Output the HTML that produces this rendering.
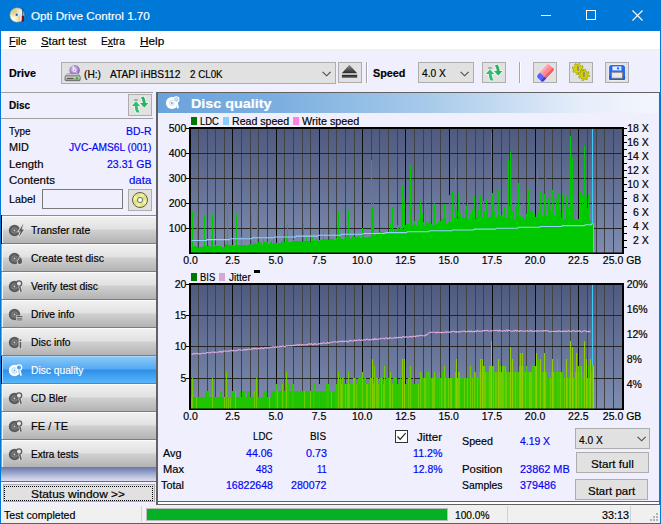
<!DOCTYPE html>
<html><head><meta charset="utf-8"><title>Opti Drive Control 1.70</title>
<style>
html,body{margin:0;padding:0;}
body{width:661px;height:524px;overflow:hidden;background:#efeffd;font-family:"Liberation Sans",sans-serif;}
#w{position:relative;width:661px;height:524px;overflow:hidden;background:#efeffd;}
#w>div,#w>svg,#w>span{position:absolute;}
#w>svg{overflow:visible;}
.t{white-space:pre;transform-origin:0 50%;-webkit-text-stroke:0.18px currentColor;}
u{text-decoration:underline;text-underline-offset:1px;}
</style></head><body><div id="w">
<div style="left:0px;top:0px;width:661px;height:31px;background:#0078d7"></div>
<div style="left:0px;top:31px;width:1px;height:493px;background:#0078d7"></div>
<div style="left:660px;top:31px;width:1px;height:493px;background:#0078d7"></div>
<div style="left:0px;top:523px;width:661px;height:1px;background:#0078d7"></div>
<div style="left:9.6px;top:7.6px;width:14.2px;height:14.2px;border-radius:50%;background:conic-gradient(from 0deg,#e6d69c 0deg,#f8efc4 30deg,#fffbe4 60deg,#f1e4b0 100deg,#e2d090 140deg,#fdf6d2 200deg,#fffce8 235deg,#ead9a0 280deg,#dccb8c 320deg,#e6d69c 360deg);box-shadow:0 0 0 .5px rgba(190,170,100,.8)"></div>
<svg style="left:9px;top:7px" width="16" height="16" viewBox="9 7 16 16">
<circle cx="16.7" cy="14.7" r="2.2" fill="#e9e6e0"/><circle cx="16.7" cy="14.7" r="1.2" fill="#0a6ed0"/>
<path d="M19.0 9.8 L19.6 8.8 L19.9 10.4 L20.5 10.4 L20.9 8.9 L21.4 10 L20.9 12 L21.1 21 L20.2 21.6 L19.7 12 Z" fill="#f2f0ec" stroke="#cfc8b4" stroke-width=".3"/>
<rect x="22.3" y="8.6" width="1" height="7" fill="#1a3a7a"/>
<rect x="21.9" y="15.6" width="2.1" height="6" rx=".6" fill="#7a0c0c"/>
</svg>
<span class="t" style="top:10px;font-size:11.2px;line-height:12px;color:#fff;left:31.00px;transform:scaleX(1.0447);">Opti Drive Control 1.70</span>
<div style="left:541px;top:15px;width:10px;height:1px;background:#fff"></div>
<div style="left:586px;top:10px;width:10px;height:10px;border:1px solid #fff;box-sizing:border-box"></div>
<svg style="left:632px;top:10px" width="11" height="11" viewBox="0 0 11 11"><path d="M0.5 0.5 L10.5 10.5 M10.5 0.5 L0.5 10.5" stroke="#fff" stroke-width="1.1" fill="none"/></svg>
<div style="left:1px;top:31px;width:659px;height:18px;background:#fff"></div>
<div style="left:1px;top:49px;width:659px;height:2px;background:#f0f0f0"></div>
<span class="t" style="top:35px;font-size:11.2px;line-height:12px;color:#000;left:8.50px;transform:scaleX(0.9705);"><u>F</u>ile</span>
<span class="t" style="top:35px;font-size:11.2px;line-height:12px;color:#000;left:40.50px;transform:scaleX(1.0156);"><u>S</u>tart test</span>
<span class="t" style="top:35px;font-size:11.2px;line-height:12px;color:#000;left:100.50px;transform:scaleX(0.9158);">E<u>x</u>tra</span>
<span class="t" style="top:35px;font-size:11.2px;line-height:12px;color:#000;left:139.50px;transform:scaleX(1.0514);"><u>H</u>elp</span>
<div style="left:1px;top:51px;width:659px;height:41px;background:#efeffd"></div>
<span class="t" style="top:67px;font-size:11.2px;line-height:12px;color:#000;font-weight:bold;left:9.40px;transform:scaleX(0.9643);">Drive</span>
<div style="left:61px;top:62px;width:275px;height:22px;background:#e1e1e1;border:1px solid #adadad;box-sizing:border-box"></div>
<svg style="left:64px;top:65px" width="17" height="16" viewBox="0 0 17 16">
<defs><radialGradient id="gpd" cx="45%" cy="40%" r="65%"><stop offset="0" stop-color="#f4ecff"/><stop offset="0.55" stop-color="#a98ad0"/><stop offset="1" stop-color="#6b4fa0"/></radialGradient>
<linearGradient id="gdr" x1="0" y1="0" x2="0" y2="1"><stop offset="0" stop-color="#e8e8e8"/><stop offset="1" stop-color="#8c8c8c"/></linearGradient></defs>
<circle cx="10.6" cy="5.3" r="5.2" fill="url(#gpd)"/>
<path d="M10.6 5.3 L7 1.6 A5.2 5.2 0 0 1 10 0.2 Z" fill="#fff" opacity=".45"/><path d="M10.6 5.3 L14.6 8.6 A5.2 5.2 0 0 1 12 10.3 Z" fill="#fff" opacity=".35"/>
<circle cx="10.6" cy="5.3" r="1.7" fill="#f2ecfa"/><circle cx="10.6" cy="5.3" r=".7" fill="#9a86c0"/>
<path d="M1.2 11 L3.8 8.7 L14.2 8.7 L16 11 Z" fill="#d4d4d4" stroke="#7a7a7a" stroke-width=".6"/>
<rect x="1" y="11" width="15.2" height="4.7" rx=".9" fill="url(#gdr)" stroke="#5e5e5e" stroke-width=".8"/>
<rect x="3" y="12.9" width="6.4" height="1" fill="#4a4a4a"/>
<circle cx="12.9" cy="13.3" r="1.25" fill="#1ec41e"/>
</svg>
<span class="t" style="top:68px;font-size:11.2px;line-height:12px;color:#000;left:83.60px;transform:scaleX(0.9116);">(H:)</span>
<span class="t" style="top:68px;font-size:11.2px;line-height:12px;color:#000;left:109.80px;transform:scaleX(0.9136);">ATAPI iHBS112</span>
<span class="t" style="top:68px;font-size:11.2px;line-height:12px;color:#000;left:189.80px;transform:scaleX(0.8728);">2 CL0K</span>
<svg style="left:322.4px;top:70.8px" width="10" height="6" viewBox="0 0 10 6"><path d="M0.6 0.8 L4.6 4.8 L8.6 0.8" stroke="#4a4a4a" stroke-width="1.15" fill="none"/></svg>
<div style="left:338px;top:62px;width:24px;height:21px;background:#e1e1e1;border:1px solid #adadad;box-sizing:border-box"></div>
<svg style="left:341px;top:64px" width="17" height="15" viewBox="0 0 17 15"><defs><linearGradient id="gej" x1="0" y1="0" x2="0" y2="1"><stop offset="0" stop-color="#909090"/><stop offset="1" stop-color="#282828"/></linearGradient><linearGradient id="gej2" x1="0" y1="0" x2="0" y2="1"><stop offset="0" stop-color="#1e1e1e"/><stop offset="1" stop-color="#606060"/></linearGradient></defs><path d="M8.4 0.8 L16.2 9.2 L0.8 9.2 Z" fill="url(#gej)"/><rect x="0.9" y="10.8" width="15.3" height="3" fill="url(#gej2)"/></svg>
<div style="left:366px;top:62px;width:1px;height:21px;background:#a8a8a8"></div>
<div style="left:367px;top:62px;width:1px;height:21px;background:#fff"></div>
<span class="t" style="top:67px;font-size:11.2px;line-height:12px;color:#000;font-weight:bold;left:372.50px;transform:scaleX(0.9673);">Speed</span>
<div style="left:418px;top:62px;width:56px;height:21px;background:#e1e1e1;border:1px solid #adadad;box-sizing:border-box"></div>
<span class="t" style="top:67px;font-size:11.2px;line-height:12px;color:#000;left:421.80px;transform:scaleX(0.9101);">4.0 X</span>
<svg style="left:460.4px;top:70.8px" width="10" height="6" viewBox="0 0 10 6"><path d="M0.6 0.8 L4.6 4.8 L8.6 0.8" stroke="#4a4a4a" stroke-width="1.15" fill="none"/></svg>
<div style="left:482px;top:62px;width:24px;height:21px;background:#e1e1e1;border:1px solid #adadad;box-sizing:border-box"></div>
<svg style="left:482px;top:62px" width="24" height="22" viewBox="0 0 24 22">
<g stroke="#f4fff8" stroke-width="1.6" stroke-linejoin="round" opacity=".9"><path d="M3.8 12 L8 7.2 L12.2 12 L9.6 12 Q9.8 15.6 11.6 18.4 L8.4 18.6 Q6.9 15.8 6.8 12 Z" fill="none"/><path d="M12 9 L16.3 13.8 L20.4 9 L17.8 9 Q17.6 5.2 15.6 2.6 L12.8 3.6 Q14.6 5.8 14.8 9 Z" fill="none"/></g>
<path d="M3.8 12 L8 7.2 L12.2 12 L9.6 12 Q9.8 15.6 11.6 18.4 L8.4 18.6 Q6.9 15.8 6.8 12 Z" fill="#2cc070"/>
<path d="M12 9 L16.3 13.8 L20.4 9 L17.8 9 Q17.6 5.2 15.6 2.6 L12.8 3.6 Q14.6 5.8 14.8 9 Z" fill="#27b264"/>
<path d="M6.2 6 H9.8" stroke="#555" stroke-width=".8"/>
</svg>
<div style="left:519px;top:62px;width:1px;height:21px;background:#a8a8a8"></div>
<div style="left:520px;top:62px;width:1px;height:21px;background:#fff"></div>
<div style="left:533px;top:62px;width:24px;height:21px;background:#e1e1e1;border:1px solid #adadad;box-sizing:border-box"></div>
<svg style="left:533px;top:62px" width="24" height="21" viewBox="0 0 24 21">
<g transform="translate(12.4 11) rotate(-47)">
<g transform="scale(0.96 1.14)"><rect x="-9.6" y="-4.2" width="19.2" height="8.4" rx="1.8" fill="#fff" opacity=".9"/>
<path d="M-3.6 -3.8 H7.4 Q9.2 -3.8 9.2 -2 V2 Q9.2 3.8 7.4 3.8 H-3.6 Z" fill="#ff8890"/>
<path d="M-3.6 1.6 H9.2 V2 Q9.2 3.8 7.4 3.8 H-3.6 Z" fill="#e8606c"/>
<path d="M-3.6 -3.8 H7.4 Q9.2 -3.8 9.2 -2 V-1.6 H-3.6 Z" fill="#ffa4aa"/>
<path d="M-3.6 -3.8 H-7.2 Q-9.2 -3.8 -9.2 -2 V2 Q-9.2 3.8 -7.2 3.8 H-3.6 Z" fill="#5866ff"/>
<path d="M-3.6 1.6 H-9.2 V2 Q-9.2 3.8 -7.2 3.8 H-3.6 Z" fill="#3444d8"/>
</g></g></svg>
<div style="left:569px;top:62px;width:24px;height:21px;background:#e1e1e1;border:1px solid #adadad;box-sizing:border-box"></div>
<svg style="left:569px;top:62px" width="24" height="21" viewBox="0 0 24 21">
<g>
<circle cx="8.9" cy="6.9" r="4.6" fill="none" stroke="#6a6a00" stroke-width="2.4" stroke-dasharray="1.7 1.9"/>
<circle cx="8.9" cy="6.9" r="4.3" fill="#d6d600" stroke="#8a8a00" stroke-width=".6"/>
<circle cx="8.9" cy="6.9" r="4.6" fill="none" stroke="#d6d600" stroke-width="1.6" stroke-dasharray="1.7 1.9"/>
<rect x="8" y="4.2" width="1.9" height="4.6" fill="#8c8c8c"/>
<circle cx="14.8" cy="12.9" r="4.6" fill="none" stroke="#6a6a00" stroke-width="2.4" stroke-dasharray="1.7 1.9"/>
<circle cx="14.8" cy="12.9" r="4.3" fill="#d0d000" stroke="#8a8a00" stroke-width=".6"/>
<circle cx="14.8" cy="12.9" r="4.6" fill="none" stroke="#d0d000" stroke-width="1.6" stroke-dasharray="1.7 1.9"/>
<rect x="13.9" y="10.2" width="1.9" height="4.6" fill="#8c8c8c"/>
</g></svg>
<div style="left:605px;top:62px;width:24px;height:21px;background:#e1e1e1;border:1px solid #adadad;box-sizing:border-box"></div>
<svg style="left:605px;top:62px" width="24" height="21" viewBox="0 0 24 21">
<path d="M5.4 2.4 H18.4 L20.6 4.6 V17 Q20.6 18.4 19.2 18.4 H5 Q3.6 18.4 3.6 17 V4.2 Z" fill="#fff" opacity=".9"/>
<path d="M5.6 2.9 H18.2 L20.1 4.8 V16.8 Q20.1 17.9 19 17.9 H5.2 Q4.1 17.9 4.1 16.8 V4.4 Z" fill="#256af0"/>
<path d="M4.1 14 V16.8 Q4.1 17.9 5.2 17.9 H19 Q20.1 17.9 20.1 16.8 V14 Z" fill="#1c5ce0"/>
<rect x="7.4" y="4.4" width="9" height="4" fill="#e6eefc"/>
<circle cx="13" cy="6.4" r="1.15" fill="#2468ff"/><rect x="14.6" y="4.4" width="1" height="4" fill="#c8d8f8"/>
<rect x="6.6" y="10.2" width="11" height="6" fill="#e9e9e9" stroke="#7c7c7c" stroke-width=".9"/>
</svg>
<div style="left:1px;top:92px;width:152px;height:1px;background:#a0a0a0"></div>
<span class="t" style="top:99px;font-size:11.2px;line-height:12px;color:#000;font-weight:bold;left:9.20px;transform:scaleX(0.8886);">Disc</span>
<div style="left:128px;top:94px;width:24px;height:22px;background:#e1e1e1;border:1px solid #adadad;box-sizing:border-box"></div>
<svg style="left:128px;top:94px" width="24" height="22" viewBox="0 0 24 22">
<g stroke="#f4fff8" stroke-width="1.6" stroke-linejoin="round" opacity=".9"><path d="M3.8 12 L8 7.2 L12.2 12 L9.6 12 Q9.8 15.6 11.6 18.4 L8.4 18.6 Q6.9 15.8 6.8 12 Z" fill="none"/><path d="M12 9 L16.3 13.8 L20.4 9 L17.8 9 Q17.6 5.2 15.6 2.6 L12.8 3.6 Q14.6 5.8 14.8 9 Z" fill="none"/></g>
<path d="M3.8 12 L8 7.2 L12.2 12 L9.6 12 Q9.8 15.6 11.6 18.4 L8.4 18.6 Q6.9 15.8 6.8 12 Z" fill="#2cc070"/>
<path d="M12 9 L16.3 13.8 L20.4 9 L17.8 9 Q17.6 5.2 15.6 2.6 L12.8 3.6 Q14.6 5.8 14.8 9 Z" fill="#27b264"/>
<path d="M6.2 6 H9.8" stroke="#555" stroke-width=".8"/>
</svg>
<div style="left:1px;top:118px;width:152px;height:1px;background:#a0a0a0"></div>
<span class="t" style="top:125px;font-size:11.2px;line-height:12px;color:#000;left:9.20px;transform:scaleX(0.8846);">Type</span>
<span class="t" style="top:125px;font-size:11.2px;line-height:12px;color:#0404f4;left:126.00px;transform:scaleX(0.9312);">BD-R</span>
<span class="t" style="top:141px;font-size:11.2px;line-height:12px;color:#000;left:9.20px;transform:scaleX(0.9731);">MID</span>
<span class="t" style="top:141px;font-size:11.2px;line-height:12px;color:#0404f4;left:69.00px;transform:scaleX(0.9122);">JVC-AMS6L (001)</span>
<span class="t" style="top:158px;font-size:11.2px;line-height:12px;color:#000;left:9.20px;transform:scaleX(1.0067);">Length</span>
<span class="t" style="top:158px;font-size:11.2px;line-height:12px;color:#0404f4;left:106.70px;transform:scaleX(0.9404);">23.31 GB</span>
<span class="t" style="top:174px;font-size:11.2px;line-height:12px;color:#000;left:9.20px;transform:scaleX(1.0255);">Contents</span>
<span class="t" style="top:174px;font-size:11.2px;line-height:12px;color:#0404f4;left:129.00px;transform:scaleX(1.0211);">data</span>
<span class="t" style="top:193px;font-size:11.2px;line-height:12px;color:#000;left:9.20px;transform:scaleX(0.9604);">Label</span>
<div style="left:42px;top:189px;width:81px;height:20px;background:#efeffd;border:1px solid #7a7a7a;box-sizing:border-box"></div>
<div style="left:128px;top:189px;width:24px;height:22px;background:#e1e1e1;border:1px solid #adadad;box-sizing:border-box"></div>
<div style="left:132.1px;top:192.0px;width:16px;height:16px;border-radius:50%;box-sizing:border-box;border:.8px solid #5e5e30;background:conic-gradient(from 20deg,#f4f4a8 0deg,#dcdc80 45deg,#f6f6b0 90deg,#e0e088 135deg,#f4f4a8 180deg,#dcdc80 225deg,#f6f6b0 270deg,#e0e088 315deg,#f4f4a8 360deg)"></div>
<svg style="left:128px;top:189px" width="24" height="22" viewBox="0 0 24 22">
<circle cx="12.1" cy="11" r="2.7" fill="#e4f0dc" stroke="#6c6c5c" stroke-width=".9"/><circle cx="12.1" cy="11" r="1.1" fill="#fff"/>
</svg>
<div style="left:1px;top:215px;width:155px;height:1px;background:#8c8c8c"></div>
<div style="left:1px;top:216px;width:155px;height:27px;background:linear-gradient(#f2f2f2 0%,#e1e1e1 48%,#d0d0d0 52%,#b3b3b3 100%)"></div>
<div style="left:1px;top:216px;width:155px;height:1px;background:#fafafa"></div>
<div style="left:1px;top:216px;width:1px;height:27px;background:#9a9a9a"></div>
<div style="left:2px;top:216px;width:1px;height:27px;background:#f6f6f6"></div>
<div style="left:1px;top:243px;width:155px;height:1px;background:#7d7d7d"></div>
<svg style="left:7.6px;top:221.8px" width="17" height="17" viewBox="0 0 17 17"><circle cx="6.5" cy="8.5" r="5.7" fill="#5c5c5c"/><circle cx="6.5" cy="8.5" r="2.7" fill="none" stroke="#a0a0a0" stroke-width=".7"/><circle cx="6.5" cy="8.5" r=".9" fill="#d6d6d6"/><path d="M15.4 1.8 L10.4 9.4 L12.6 9.4 L10.8 15.6 L16 7.4 L13.6 7.4 Z" fill="#e4e4e4" stroke="#e4e4e4" stroke-width="1.6"/><path d="M15.4 1.8 L10.4 9.4 L12.6 9.4 L10.8 15.6 L16 7.4 L13.6 7.4 Z" fill="#5c5c5c"/></svg>
<span class="t" style="top:224px;font-size:11.5px;line-height:12px;color:#000;left:31.20px;transform:scaleX(0.9070);">Transfer rate</span>
<div style="left:1px;top:244px;width:155px;height:27px;background:linear-gradient(#f2f2f2 0%,#e1e1e1 48%,#d0d0d0 52%,#b3b3b3 100%)"></div>
<div style="left:1px;top:244px;width:155px;height:1px;background:#fafafa"></div>
<div style="left:1px;top:244px;width:1px;height:27px;background:#9a9a9a"></div>
<div style="left:2px;top:244px;width:1px;height:27px;background:#f6f6f6"></div>
<div style="left:1px;top:271px;width:155px;height:1px;background:#7d7d7d"></div>
<svg style="left:7.6px;top:249.8px" width="17" height="17" viewBox="0 0 17 17"><circle cx="6.5" cy="8.5" r="5.7" fill="#5c5c5c"/><circle cx="6.5" cy="8.5" r="2.7" fill="none" stroke="#a0a0a0" stroke-width=".7"/><circle cx="6.5" cy="8.5" r=".9" fill="#d6d6d6"/><path d="M11.8 6.2 Q14.8 8.6 14.6 11.6 Q14.4 14.4 11.8 14.6 Q9.2 14.4 9.2 11.8 Q9.4 9.6 11 9 Q10.6 7.4 11.8 6.2 Z" fill="#5c5c5c" stroke="#e4e4e4" stroke-width=".8"/></svg>
<span class="t" style="top:252px;font-size:11.5px;line-height:12px;color:#000;left:31.20px;transform:scaleX(0.9128);">Create test disc</span>
<div style="left:1px;top:272px;width:155px;height:27px;background:linear-gradient(#f2f2f2 0%,#e1e1e1 48%,#d0d0d0 52%,#b3b3b3 100%)"></div>
<div style="left:1px;top:272px;width:155px;height:1px;background:#fafafa"></div>
<div style="left:1px;top:272px;width:1px;height:27px;background:#9a9a9a"></div>
<div style="left:2px;top:272px;width:1px;height:27px;background:#f6f6f6"></div>
<div style="left:1px;top:299px;width:155px;height:1px;background:#7d7d7d"></div>
<svg style="left:7.6px;top:277.8px" width="17" height="17" viewBox="0 0 17 17"><circle cx="6.5" cy="8.5" r="5.7" fill="#5c5c5c"/><circle cx="6.5" cy="8.5" r="2.7" fill="none" stroke="#a0a0a0" stroke-width=".7"/><circle cx="6.5" cy="8.5" r=".9" fill="#d6d6d6"/><circle cx="11" cy="5.6" r="2.7" fill="#e4e4e4" stroke="#5c5c5c" stroke-width="1.3"/><path d="M11.8 8.4 L13 13.6" stroke="#e4e4e4" stroke-width="3"/><path d="M11.8 8.4 L13 13.6" stroke="#5c5c5c" stroke-width="1.7"/></svg>
<span class="t" style="top:280px;font-size:11.5px;line-height:12px;color:#000;left:31.20px;transform:scaleX(0.9040);">Verify test disc</span>
<div style="left:1px;top:300px;width:155px;height:27px;background:linear-gradient(#f2f2f2 0%,#e1e1e1 48%,#d0d0d0 52%,#b3b3b3 100%)"></div>
<div style="left:1px;top:300px;width:155px;height:1px;background:#fafafa"></div>
<div style="left:1px;top:300px;width:1px;height:27px;background:#9a9a9a"></div>
<div style="left:2px;top:300px;width:1px;height:27px;background:#f6f6f6"></div>
<div style="left:1px;top:327px;width:155px;height:1px;background:#7d7d7d"></div>
<svg style="left:7.6px;top:305.8px" width="17" height="17" viewBox="0 0 17 17"><circle cx="6.5" cy="8.5" r="5.7" fill="#5c5c5c"/><circle cx="6.5" cy="8.5" r="2.7" fill="none" stroke="#a0a0a0" stroke-width=".7"/><circle cx="6.5" cy="8.5" r=".9" fill="#d6d6d6"/><rect x="8" y="9.5" width="7" height="5" fill="#e4e4e4"/><path d="M8.5 10.5 H14.5 M8.5 12.2 H14.5 M8.5 13.9 H14.5" stroke="#5c5c5c" stroke-width="1"/></svg>
<span class="t" style="top:308px;font-size:11.5px;line-height:12px;color:#000;left:31.20px;transform:scaleX(0.8953);">Drive info</span>
<div style="left:1px;top:328px;width:155px;height:27px;background:linear-gradient(#f2f2f2 0%,#e1e1e1 48%,#d0d0d0 52%,#b3b3b3 100%)"></div>
<div style="left:1px;top:328px;width:155px;height:1px;background:#fafafa"></div>
<div style="left:1px;top:328px;width:1px;height:27px;background:#9a9a9a"></div>
<div style="left:2px;top:328px;width:1px;height:27px;background:#f6f6f6"></div>
<div style="left:1px;top:355px;width:155px;height:1px;background:#7d7d7d"></div>
<svg style="left:7.6px;top:333.8px" width="17" height="17" viewBox="0 0 17 17"><circle cx="6.5" cy="8.5" r="5.7" fill="#5c5c5c"/><circle cx="6.5" cy="8.5" r="2.7" fill="none" stroke="#a0a0a0" stroke-width=".7"/><circle cx="6.5" cy="8.5" r=".9" fill="#d6d6d6"/><rect x="10.6" y="5" width="3.6" height="10" fill="#e4e4e4"/><rect x="11.6" y="8" width="1.7" height="6.4" fill="#5c5c5c"/><rect x="11.6" y="5.4" width="1.7" height="1.7" fill="#5c5c5c"/></svg>
<span class="t" style="top:336px;font-size:11.5px;line-height:12px;color:#000;left:31.20px;transform:scaleX(0.8956);">Disc info</span>
<div style="left:1px;top:356px;width:155px;height:27px;background:linear-gradient(#8ccafa 0%,#55aaf2 48%,#2f8fe8 52%,#58b6fa 100%)"></div>
<div style="left:1px;top:356px;width:155px;height:1px;background:#a6d6fb"></div>
<div style="left:1px;top:356px;width:1px;height:27px;background:#9a9a9a"></div>
<div style="left:2px;top:356px;width:1px;height:27px;background:#a6d6fb"></div>
<div style="left:1px;top:383px;width:155px;height:1px;background:#7d7d7d"></div>
<svg style="left:7.6px;top:361.8px" width="17" height="17" viewBox="0 0 17 17"><circle cx="6.5" cy="8.5" r="5.7" fill="#fff"/><circle cx="6.5" cy="8.5" r="2.7" fill="none" stroke="#7fbcf4" stroke-width=".7"/><circle cx="6.5" cy="8.5" r=".9" fill="#4aa3f0"/><circle cx="11" cy="5.6" r="2.7" fill="#4aa3f0" stroke="#fff" stroke-width="1.3"/><path d="M11.8 8.4 L13 13.6" stroke="#4aa3f0" stroke-width="3"/><path d="M11.8 8.4 L13 13.6" stroke="#fff" stroke-width="1.7"/></svg>
<span class="t" style="top:364px;font-size:11.5px;line-height:12px;color:#fff;left:31.20px;transform:scaleX(0.8908);">Disc quality</span>
<div style="left:1px;top:384px;width:155px;height:27px;background:linear-gradient(#f2f2f2 0%,#e1e1e1 48%,#d0d0d0 52%,#b3b3b3 100%)"></div>
<div style="left:1px;top:384px;width:155px;height:1px;background:#fafafa"></div>
<div style="left:1px;top:384px;width:1px;height:27px;background:#9a9a9a"></div>
<div style="left:2px;top:384px;width:1px;height:27px;background:#f6f6f6"></div>
<div style="left:1px;top:411px;width:155px;height:1px;background:#7d7d7d"></div>
<svg style="left:7.6px;top:389.8px" width="17" height="17" viewBox="0 0 17 17"><circle cx="6.5" cy="8.5" r="5.7" fill="#5c5c5c"/><circle cx="6.5" cy="8.5" r="2.7" fill="none" stroke="#a0a0a0" stroke-width=".7"/><circle cx="6.5" cy="8.5" r=".9" fill="#d6d6d6"/><circle cx="11" cy="5.6" r="2.7" fill="#e4e4e4" stroke="#5c5c5c" stroke-width="1.3"/><path d="M11.8 8.4 L13 13.6" stroke="#e4e4e4" stroke-width="3"/><path d="M11.8 8.4 L13 13.6" stroke="#5c5c5c" stroke-width="1.7"/></svg>
<span class="t" style="top:392px;font-size:11.5px;line-height:12px;color:#000;left:31.20px;transform:scaleX(0.8919);">CD Bler</span>
<div style="left:1px;top:412px;width:155px;height:27px;background:linear-gradient(#f2f2f2 0%,#e1e1e1 48%,#d0d0d0 52%,#b3b3b3 100%)"></div>
<div style="left:1px;top:412px;width:155px;height:1px;background:#fafafa"></div>
<div style="left:1px;top:412px;width:1px;height:27px;background:#9a9a9a"></div>
<div style="left:2px;top:412px;width:1px;height:27px;background:#f6f6f6"></div>
<div style="left:1px;top:439px;width:155px;height:1px;background:#7d7d7d"></div>
<svg style="left:7.6px;top:417.8px" width="17" height="17" viewBox="0 0 17 17"><circle cx="6.5" cy="8.5" r="5.7" fill="#5c5c5c"/><circle cx="6.5" cy="8.5" r="2.7" fill="none" stroke="#a0a0a0" stroke-width=".7"/><circle cx="6.5" cy="8.5" r=".9" fill="#d6d6d6"/><circle cx="11" cy="5.6" r="2.7" fill="#e4e4e4" stroke="#5c5c5c" stroke-width="1.3"/><path d="M11.8 8.4 L13 13.6" stroke="#e4e4e4" stroke-width="3"/><path d="M11.8 8.4 L13 13.6" stroke="#5c5c5c" stroke-width="1.7"/></svg>
<span class="t" style="top:420px;font-size:11.5px;line-height:12px;color:#000;left:31.20px;transform:scaleX(0.9599);">FE / TE</span>
<div style="left:1px;top:440px;width:155px;height:27px;background:linear-gradient(#f2f2f2 0%,#e1e1e1 48%,#d0d0d0 52%,#b3b3b3 100%)"></div>
<div style="left:1px;top:440px;width:155px;height:1px;background:#fafafa"></div>
<div style="left:1px;top:440px;width:1px;height:27px;background:#9a9a9a"></div>
<div style="left:2px;top:440px;width:1px;height:27px;background:#f6f6f6"></div>
<div style="left:1px;top:467px;width:155px;height:1px;background:#7d7d7d"></div>
<svg style="left:7.6px;top:445.8px" width="17" height="17" viewBox="0 0 17 17"><circle cx="6.5" cy="8.5" r="5.7" fill="#5c5c5c"/><circle cx="6.5" cy="8.5" r="2.7" fill="none" stroke="#a0a0a0" stroke-width=".7"/><circle cx="6.5" cy="8.5" r=".9" fill="#d6d6d6"/><circle cx="11" cy="5.6" r="2.7" fill="#e4e4e4" stroke="#5c5c5c" stroke-width="1.3"/><path d="M11.8 8.4 L13 13.6" stroke="#e4e4e4" stroke-width="3"/><path d="M11.8 8.4 L13 13.6" stroke="#5c5c5c" stroke-width="1.7"/></svg>
<span class="t" style="top:448px;font-size:11.5px;line-height:12px;color:#000;left:31.20px;transform:scaleX(0.8742);">Extra tests</span>
<div style="left:1px;top:215px;width:1px;height:29px;background:#000"></div>
<div style="left:1px;top:356px;width:1px;height:28px;background:#000"></div>
<div style="left:1px;top:468px;width:155px;height:13px;background:linear-gradient(#6f7fb0 0%,#8f9cc4 30%,#c4cae2 75%,#dadcee 100%)"></div>
<div style="left:1px;top:481px;width:155px;height:1px;background:#707070"></div>
<div style="left:1px;top:482px;width:155px;height:22px;background:#efeffd"></div>
<div style="left:3px;top:484px;width:152px;height:18px;background:#e1e1e1;border:1px solid #adadad;box-sizing:border-box"></div>
<div style="left:4px;top:486px;width:149px;height:15px;border:1px dotted #000;box-sizing:border-box"></div>
<span class="t" style="top:488px;font-size:10.6px;line-height:12px;color:#000;left:30.60px;transform:scaleX(1.1232);">Status window >></span>
<div style="left:156px;top:92px;width:504px;height:413px;background:#efeffd;border:solid #626262;border-width:1px 1px 1px 2px;box-sizing:border-box"></div>
<div style="left:158px;top:501px;width:501px;height:1px;background:#626262"></div>
<div style="left:158px;top:502px;width:501px;height:2px;background:#fff"></div>
<div style="left:158px;top:93px;width:500px;height:20px;background:linear-gradient(90deg,#6aa3db 0%,#7db0e0 25%,#a9cbea 55%,#e6eefa 85%,#f4f6fd 100%)"></div>
<svg style="left:165px;top:94px" width="16" height="16" viewBox="0 0 16 16">
<circle cx="6.9" cy="8.9" r="6" fill="#fff"/><circle cx="6.9" cy="8.9" r="2.4" fill="none" stroke="#a8cbec" stroke-width=".7"/><circle cx="6.9" cy="8.9" r="1" fill="#6da4da"/>
<circle cx="11.2" cy="5.5" r="2.7" fill="#a9cdf0" stroke="#fff" stroke-width="1.1"/><path d="M10 4.6 L11 6.2 L12.4 4.4" stroke="#fff" stroke-width=".7" fill="none"/><path d="M11.8 8.2 L13 14.2" stroke="#fff" stroke-width="1.9"/>
</svg>
<span class="t" style="top:96px;font-size:13.2px;line-height:15px;color:#fff;font-weight:bold;left:190.70px;transform:scaleX(1.0875);">Disc quality</span>
<svg style="left:0;top:0" width="661" height="524" viewBox="0 0 661 524" shape-rendering="crispEdges">
<defs><linearGradient id="pg127" x1="0" y1="0" x2="0" y2="1"><stop offset="0" stop-color="#4d5a7e"/><stop offset="1" stop-color="#7f8db0"/></linearGradient></defs>
<rect x="189" y="127" width="435" height="127" fill="url(#pg127)"/>
<rect x="198" y="127" width="1" height="126" fill="#424242"/>
<rect x="207" y="127" width="1" height="126" fill="#424242"/>
<rect x="215" y="127" width="1" height="126" fill="#424242"/>
<rect x="224" y="127" width="1" height="126" fill="#424242"/>
<rect x="241" y="127" width="1" height="126" fill="#424242"/>
<rect x="250" y="127" width="1" height="126" fill="#424242"/>
<rect x="258" y="127" width="1" height="126" fill="#424242"/>
<rect x="267" y="127" width="1" height="126" fill="#424242"/>
<rect x="284" y="127" width="1" height="126" fill="#424242"/>
<rect x="293" y="127" width="1" height="126" fill="#424242"/>
<rect x="302" y="127" width="1" height="126" fill="#424242"/>
<rect x="310" y="127" width="1" height="126" fill="#424242"/>
<rect x="328" y="127" width="1" height="126" fill="#424242"/>
<rect x="336" y="127" width="1" height="126" fill="#424242"/>
<rect x="345" y="127" width="1" height="126" fill="#424242"/>
<rect x="354" y="127" width="1" height="126" fill="#424242"/>
<rect x="371" y="127" width="1" height="126" fill="#424242"/>
<rect x="379" y="127" width="1" height="126" fill="#424242"/>
<rect x="388" y="127" width="1" height="126" fill="#424242"/>
<rect x="397" y="127" width="1" height="126" fill="#424242"/>
<rect x="414" y="127" width="1" height="126" fill="#424242"/>
<rect x="423" y="127" width="1" height="126" fill="#424242"/>
<rect x="431" y="127" width="1" height="126" fill="#424242"/>
<rect x="440" y="127" width="1" height="126" fill="#424242"/>
<rect x="457" y="127" width="1" height="126" fill="#424242"/>
<rect x="466" y="127" width="1" height="126" fill="#424242"/>
<rect x="475" y="127" width="1" height="126" fill="#424242"/>
<rect x="483" y="127" width="1" height="126" fill="#424242"/>
<rect x="501" y="127" width="1" height="126" fill="#424242"/>
<rect x="509" y="127" width="1" height="126" fill="#424242"/>
<rect x="518" y="127" width="1" height="126" fill="#424242"/>
<rect x="526" y="127" width="1" height="126" fill="#424242"/>
<rect x="544" y="127" width="1" height="126" fill="#424242"/>
<rect x="552" y="127" width="1" height="126" fill="#424242"/>
<rect x="561" y="127" width="1" height="126" fill="#424242"/>
<rect x="570" y="127" width="1" height="126" fill="#424242"/>
<rect x="587" y="127" width="1" height="126" fill="#424242"/>
<rect x="596" y="127" width="1" height="126" fill="#424242"/>
<rect x="604" y="127" width="1" height="126" fill="#424242"/>
<rect x="613" y="127" width="1" height="126" fill="#424242"/>
<rect x="189" y="153" width="434" height="1" fill="#262626"/>
<rect x="189" y="178" width="434" height="1" fill="#262626"/>
<rect x="189" y="203" width="434" height="1" fill="#262626"/>
<rect x="189" y="228" width="434" height="1" fill="#262626"/>
<rect x="232" y="127" width="1" height="126" fill="#0c0c0c"/>
<rect x="276" y="127" width="1" height="126" fill="#0c0c0c"/>
<rect x="319" y="127" width="1" height="126" fill="#0c0c0c"/>
<rect x="362" y="127" width="1" height="126" fill="#0c0c0c"/>
<rect x="405" y="127" width="1" height="126" fill="#0c0c0c"/>
<rect x="449" y="127" width="1" height="126" fill="#0c0c0c"/>
<rect x="492" y="127" width="1" height="126" fill="#0c0c0c"/>
<rect x="535" y="127" width="1" height="126" fill="#0c0c0c"/>
<rect x="578" y="127" width="1" height="126" fill="#0c0c0c"/>
<path d="M191 253V248H192V212H193V247H194V246H195V246H196V247H197V216H198V248H199V248H200V247H201V247H202V247H203V246H204V215H205V246H206V246H207V246H208V245H209V246H210V247H211V237H212V214H213V247H214V246H215V245H216V246H217V246H218V246H219V246H220V246H221V247H222V247H223V247H224V247H225V244H226V244H227V182H228V245H229V245H230V245H231V245H232V245H233V246H234V246H235V245H236V214H237V245H238V245H239V245H240V245H241V237H242V245H243V245H244V245H245V245H246V246H247V245H248V245H249V244H250V244H251V214H252V245H253V242H254V244H255V242H256V244H257V196H258V242H259V242H260V242H261V244H262V245H263V237H264V242H265V242H266V242H267V242H268V244H269V244H270V242H271V241H272V244H273V236H274V243H275V243H276V243H277V244H278V243H279V243H280V243H281V242H282V241H283V234H284V242H285V242H286V236H287V224H288V242H289V242H290V242H291V242H292V241H293V240H294V241H295V241H296V241H297V241H298V241H299V241H300V241H301V242H302V242H303V224H304V241H305V241H306V238H307V241H308V241H309V241H310V242H311V241H312V236H313V241H314V240H315V241H316V239H317V241H318V241H319V240H320V240H321V240H322V239H323V230H324V239H325V239H326V240H327V239H328V240H329V230H330V239H331V239H332V239H333V239H334V240H335V240H336V238H337V239H338V211H339V237H340V238H341V239H342V239H343V239H344V238H345V237H346V237H347V232H348V209H349V237H350V239H351V238H352V236H353V236H354V237H355V237H356V237H357V237H358V236H359V237H360V238H361V238H362V228H363V229H364V238H365V237H366V237H367V238H368V237H369V236H370V237H371V160H372V207H373V192H374V236H375V234H376V234H377V233H378V233H379V232H380V231H381V232H382V234H383V235H384V233H385V235H386V234H387V234H388V233H389V232H390V223H391V232H392V207H393V232H394V230H395V230H396V231H397V225H398V227H399V229H400V228H401V228H402V186H403V229H404V202H405V225H406V224H407V224H408V224H409V226H410V165H411V209H412V225H413V225H414V221H415V224H416V225H417V227H418V220H419V224H420V201H421V217H422V214H423V222H424V226H425V203H426V221H427V223H428V223H429V210H430V221H431V224H432V225H433V225H434V203H435V225H436V224H437V223H438V221H439V223H440V221H441V215H442V219H443V218H444V204H445V218H446V223H447V224H448V222H449V195H450V221H451V222H452V191H453V222H454V218H455V168H456V210H457V219H458V194H459V202H460V213H461V217H462V218H463V195H464V218H465V209H466V206H467V192H468V220H469V220H470V214H471V221H472V209H473V218H474V195H475V219H476V218H477V199H478V210H479V216H480V195H481V192H482V218H483V201H484V212H485V218H486V200H487V211H488V217H489V215H490V217H491V133H492V193H493V202H494V212H495V218H496V217H497V216H498V189H499V215H500V216H501V215H502V215H503V218H504V207H505V217H506V218H507V217H508V159H509V206H510V152H511V203H512V212H513V210H514V220H515V201H516V206H517V216H518V183H519V216H520V216H521V219H522V218H523V192H524V220H525V205H526V214H527V217H528V189H529V201H530V212H531V210H532V212H533V217H534V214H535V217H536V217H537V169H538V211H539V217H540V191H541V217H542V216H543V217H544V194H545V178H546V216H547V217H548V197H549V198H550V209H551V214H552V190H553V214H554V216H555V218H556V199H557V210H558V193H559V209H560V212H561V218H562V194H563V220H564V219H565V218H566V196H567V201H568V208H569V215H570V136H571V195H572V157H573V205H574V220H575V183H576V220H577V181H578V219H579V221H580V191H581V219H582V196H583V208H584V146H585V185H586V197H587V208H588V193H589V219H590V221H591V224H592V223H593V253Z" fill="#00c800"/>
<path d="M191.5 240.5 L192.5 240.5 L193.5 240.5 L194.5 240.5 L195.5 240.5 L196.5 240.5 L197.5 240.5 L198.5 240.5 L199.5 240.5 L200.5 240.5 L201.5 240.5 L202.5 240.5 L203.5 240.5 L204.5 240.5 L205.5 240.5 L206.5 240.5 L207.5 239.6 L208.5 239.6 L209.5 239.6 L210.5 239.6 L211.5 239.6 L212.5 239.6 L213.5 239.6 L214.5 239.6 L215.5 239.6 L216.5 239.6 L217.5 239.6 L218.5 239.6 L219.5 239.6 L220.5 239.6 L221.5 239.6 L222.5 239.6 L223.5 239.6 L224.5 239.6 L225.5 239.6 L226.5 239.6 L227.5 239.6 L228.5 239.6 L229.5 239.6 L230.5 238.7 L231.5 238.7 L232.5 238.7 L233.5 238.7 L234.5 238.7 L235.5 238.7 L236.5 238.7 L237.5 238.7 L238.5 238.7 L239.5 238.7 L240.5 238.7 L241.5 238.7 L242.5 238.7 L243.5 238.7 L244.5 238.7 L245.5 238.7 L246.5 238.7 L247.5 238.7 L248.5 238.7 L249.5 238.7 L250.5 238.7 L251.5 238.7 L252.5 237.8 L253.5 237.8 L254.5 237.8 L255.5 237.8 L256.5 237.8 L257.5 237.8 L258.5 237.8 L259.5 237.8 L260.5 237.8 L261.5 237.8 L262.5 237.8 L263.5 237.8 L264.5 237.8 L265.5 237.8 L266.5 237.8 L267.5 237.8 L268.5 237.8 L269.5 237.8 L270.5 237.8 L271.5 237.8 L272.5 237.8 L273.5 237.8 L274.5 237.0 L275.5 237.0 L276.5 237.0 L277.5 237.0 L278.5 237.0 L279.5 237.0 L280.5 237.0 L281.5 237.0 L282.5 237.0 L283.5 237.0 L284.5 237.0 L285.5 237.0 L286.5 237.0 L287.5 237.0 L288.5 237.0 L289.5 237.0 L290.5 237.0 L291.5 237.0 L292.5 237.0 L293.5 237.0 L294.5 237.0 L295.5 237.0 L296.5 236.1 L297.5 236.1 L298.5 236.1 L299.5 236.1 L300.5 236.1 L301.5 236.1 L302.5 236.1 L303.5 236.1 L304.5 236.1 L305.5 236.1 L306.5 236.1 L307.5 236.1 L308.5 236.1 L309.5 236.1 L310.5 236.1 L311.5 236.1 L312.5 236.1 L313.5 236.1 L314.5 236.1 L315.5 236.1 L316.5 236.1 L317.5 236.1 L318.5 235.2 L319.5 235.2 L320.5 235.2 L321.5 235.2 L322.5 235.2 L323.5 235.2 L324.5 235.2 L325.5 235.2 L326.5 235.2 L327.5 235.2 L328.5 235.2 L329.5 235.2 L330.5 235.2 L331.5 235.2 L332.5 235.2 L333.5 235.2 L334.5 235.2 L335.5 235.2 L336.5 235.2 L337.5 235.2 L338.5 235.2 L339.5 235.2 L340.5 235.2 L341.5 234.3 L342.5 234.3 L343.5 234.3 L344.5 234.3 L345.5 234.3 L346.5 234.3 L347.5 234.3 L348.5 234.3 L349.5 234.3 L350.5 234.3 L351.5 234.3 L352.5 234.3 L353.5 234.3 L354.5 234.3 L355.5 234.3 L356.5 234.3 L357.5 234.3 L358.5 234.3 L359.5 234.3 L360.5 234.3 L361.5 234.3 L362.5 234.3 L363.5 233.5 L364.5 233.5 L365.5 233.5 L366.5 233.5 L367.5 233.5 L368.5 233.5 L369.5 233.5 L370.5 233.5 L371.5 233.5 L372.5 233.5 L373.5 233.5 L374.5 233.5 L375.5 233.5 L376.5 233.5 L377.5 233.5 L378.5 233.5 L379.5 233.5 L380.5 233.5 L381.5 233.5 L382.5 233.5 L383.5 233.5 L384.5 233.5 L385.5 232.6 L386.5 232.6 L387.5 232.6 L388.5 232.6 L389.5 232.6 L390.5 232.6 L391.5 232.6 L392.5 232.6 L393.5 232.6 L394.5 232.6 L395.5 232.6 L396.5 232.6 L397.5 232.6 L398.5 232.6 L399.5 232.6 L400.5 232.6 L401.5 232.6 L402.5 232.6 L403.5 232.6 L404.5 232.6 L405.5 232.6 L406.5 232.6 L407.5 231.7 L408.5 231.7 L409.5 231.7 L410.5 231.7 L411.5 231.7 L412.5 231.7 L413.5 231.7 L414.5 231.7 L415.5 231.7 L416.5 231.7 L417.5 231.7 L418.5 231.7 L419.5 231.7 L420.5 231.7 L421.5 231.7 L422.5 231.7 L423.5 231.7 L424.5 231.7 L425.5 231.7 L426.5 231.7 L427.5 231.7 L428.5 231.7 L429.5 230.8 L430.5 230.8 L431.5 230.8 L432.5 230.8 L433.5 230.8 L434.5 230.8 L435.5 230.8 L436.5 230.8 L437.5 230.8 L438.5 230.8 L439.5 230.8 L440.5 230.8 L441.5 230.8 L442.5 230.8 L443.5 230.8 L444.5 230.8 L445.5 230.8 L446.5 230.8 L447.5 230.8 L448.5 230.8 L449.5 230.8 L450.5 230.8 L451.5 230.8 L452.5 230.0 L453.5 230.0 L454.5 230.0 L455.5 230.0 L456.5 230.0 L457.5 230.0 L458.5 230.0 L459.5 230.0 L460.5 230.0 L461.5 230.0 L462.5 230.0 L463.5 230.0 L464.5 230.0 L465.5 230.0 L466.5 230.0 L467.5 230.0 L468.5 230.0 L469.5 230.0 L470.5 230.0 L471.5 230.0 L472.5 230.0 L473.5 230.0 L474.5 229.1 L475.5 229.1 L476.5 229.1 L477.5 229.1 L478.5 229.1 L479.5 229.1 L480.5 229.1 L481.5 229.1 L482.5 229.1 L483.5 229.1 L484.5 229.1 L485.5 229.1 L486.5 229.1 L487.5 229.1 L488.5 229.1 L489.5 229.1 L490.5 229.1 L491.5 229.1 L492.5 229.1 L493.5 229.1 L494.5 229.1 L495.5 229.1 L496.5 228.2 L497.5 228.2 L498.5 228.2 L499.5 228.2 L500.5 228.2 L501.5 228.2 L502.5 228.2 L503.5 228.2 L504.5 228.2 L505.5 228.2 L506.5 228.2 L507.5 228.2 L508.5 228.2 L509.5 228.2 L510.5 228.2 L511.5 228.2 L512.5 228.2 L513.5 228.2 L514.5 228.2 L515.5 228.2 L516.5 228.2 L517.5 228.2 L518.5 227.3 L519.5 227.3 L520.5 227.3 L521.5 227.3 L522.5 227.3 L523.5 227.3 L524.5 227.3 L525.5 227.3 L526.5 227.3 L527.5 227.3 L528.5 227.3 L529.5 227.3 L530.5 227.3 L531.5 227.3 L532.5 227.3 L533.5 227.3 L534.5 227.3 L535.5 227.3 L536.5 227.3 L537.5 227.3 L538.5 227.3 L539.5 227.3 L540.5 226.5 L541.5 226.5 L542.5 226.5 L543.5 226.5 L544.5 226.5 L545.5 226.5 L546.5 226.5 L547.5 226.5 L548.5 226.5 L549.5 226.5 L550.5 226.5 L551.5 226.5 L552.5 226.5 L553.5 226.5 L554.5 226.5 L555.5 226.5 L556.5 226.5 L557.5 226.5 L558.5 226.5 L559.5 226.5 L560.5 226.5 L561.5 226.5 L562.5 225.6 L563.5 225.6 L564.5 225.6 L565.5 225.6 L566.5 225.6 L567.5 225.6 L568.5 225.6 L569.5 225.6 L570.5 225.6 L571.5 225.6 L572.5 225.6 L573.5 225.6 L574.5 225.6 L575.5 225.6 L576.5 225.6 L577.5 225.6 L578.5 225.6 L579.5 225.6 L580.5 225.6 L581.5 225.6 L582.5 225.6 L583.5 225.6 L584.5 225.6 L585.5 224.7 L586.5 224.7 L587.5 224.7 L588.5 224.7 L589.5 224.7 L590.5 224.7 L591.5 224.7 L592.5 222.7" fill="none" stroke="#8fd2fa" stroke-width="1.1" shape-rendering="auto"/>
<rect x="592" y="129" width="1" height="94.7" fill="#3ecbfb"/>
<rect x="593" y="223" width="1" height="30" fill="#a2acd2"/>
<rect x="189" y="127" width="2" height="127" fill="#000"/>
<rect x="189" y="127" width="435" height="2" fill="#000"/>
<rect x="189" y="252.5" width="435" height="1.5" fill="#000" shape-rendering="auto"/>
<rect x="622" y="127" width="2" height="127" fill="#000"/>
<rect x="624" y="247" width="3" height="1" fill="#000"/>
<rect x="624" y="240" width="3" height="1" fill="#000"/>
<rect x="624" y="233" width="3" height="1" fill="#000"/>
<rect x="624" y="226" width="3" height="1" fill="#000"/>
<rect x="624" y="219" width="3" height="1" fill="#000"/>
<rect x="624" y="212" width="3" height="1" fill="#000"/>
<rect x="624" y="205" width="3" height="1" fill="#000"/>
<rect x="624" y="198" width="3" height="1" fill="#000"/>
<rect x="624" y="191" width="3" height="1" fill="#000"/>
<rect x="624" y="184" width="3" height="1" fill="#000"/>
<rect x="624" y="177" width="3" height="1" fill="#000"/>
<rect x="624" y="170" width="3" height="1" fill="#000"/>
<rect x="624" y="163" width="3" height="1" fill="#000"/>
<rect x="624" y="156" width="3" height="1" fill="#000"/>
<rect x="624" y="149" width="3" height="1" fill="#000"/>
<rect x="624" y="142" width="3" height="1" fill="#000"/>
<rect x="624" y="135" width="3" height="1" fill="#000"/>
<rect x="624" y="128" width="3" height="1" fill="#000"/>
</svg>
<div style="left:186px;top:128px;width:3px;height:1px;background:#000"></div>
<span class="t" style="top:122px;font-size:10.5px;line-height:12px;color:#000;left:168.77px;">500</span>
<div style="left:186px;top:153px;width:3px;height:1px;background:#000"></div>
<span class="t" style="top:147px;font-size:10.5px;line-height:12px;color:#000;left:168.77px;">400</span>
<div style="left:186px;top:178px;width:3px;height:1px;background:#000"></div>
<span class="t" style="top:172px;font-size:10.5px;line-height:12px;color:#000;left:168.77px;">300</span>
<div style="left:186px;top:203px;width:3px;height:1px;background:#000"></div>
<span class="t" style="top:197px;font-size:10.5px;line-height:12px;color:#000;left:168.77px;">200</span>
<div style="left:186px;top:228px;width:3px;height:1px;background:#000"></div>
<span class="t" style="top:222px;font-size:10.5px;line-height:12px;color:#000;left:168.77px;">100</span>
<span class="t" style="top:234px;font-size:10.5px;line-height:12px;color:#000;left:633.05px;">2 X</span>
<span class="t" style="top:220px;font-size:10.5px;line-height:12px;color:#000;left:633.05px;">4 X</span>
<span class="t" style="top:206px;font-size:10.5px;line-height:12px;color:#000;left:633.05px;">6 X</span>
<span class="t" style="top:192px;font-size:10.5px;line-height:12px;color:#000;left:633.05px;">8 X</span>
<span class="t" style="top:178px;font-size:10.5px;line-height:12px;color:#000;left:627.22px;">10 X</span>
<span class="t" style="top:164px;font-size:10.5px;line-height:12px;color:#000;left:627.22px;">12 X</span>
<span class="t" style="top:150px;font-size:10.5px;line-height:12px;color:#000;left:627.22px;">14 X</span>
<span class="t" style="top:136px;font-size:10.5px;line-height:12px;color:#000;left:627.22px;">16 X</span>
<span class="t" style="top:122px;font-size:10.5px;line-height:12px;color:#000;left:627.22px;">18 X</span>
<span class="t" style="top:254px;font-size:10.5px;line-height:12px;color:#000;left:183.15px;">0.0</span>
<span class="t" style="top:254px;font-size:10.5px;line-height:12px;color:#000;left:225.18px;">2.5</span>
<span class="t" style="top:254px;font-size:10.5px;line-height:12px;color:#000;left:268.41px;">5.0</span>
<span class="t" style="top:254px;font-size:10.5px;line-height:12px;color:#000;left:311.64px;">7.5</span>
<span class="t" style="top:254px;font-size:10.5px;line-height:12px;color:#000;left:351.95px;">10.0</span>
<span class="t" style="top:254px;font-size:10.5px;line-height:12px;color:#000;left:395.18px;">12.5</span>
<span class="t" style="top:254px;font-size:10.5px;line-height:12px;color:#000;left:438.41px;">15.0</span>
<span class="t" style="top:254px;font-size:10.5px;line-height:12px;color:#000;left:481.64px;">17.5</span>
<span class="t" style="top:254px;font-size:10.5px;line-height:12px;color:#000;left:524.87px;">20.0</span>
<span class="t" style="top:254px;font-size:10.5px;line-height:12px;color:#000;left:568.10px;">22.5</span>
<span class="t" style="top:254px;font-size:10.5px;line-height:12px;color:#000;left:602.80px;">25.0 GB</span>
<div style="left:191px;top:117px;width:6px;height:8px;background:#007800"></div>
<span class="t" style="top:115px;font-size:10.67px;line-height:12px;color:#000;left:200.30px;transform:scaleX(0.8857);">LDC</span>
<div style="left:223px;top:117px;width:6px;height:8px;background:#86cdf8"></div>
<span class="t" style="top:115px;font-size:10.67px;line-height:12px;color:#000;left:232.10px;transform:scaleX(0.9937);">Read speed</span>
<div style="left:293px;top:117px;width:6px;height:8px;background:#ff80e0"></div>
<span class="t" style="top:115px;font-size:10.67px;line-height:12px;color:#000;left:302.10px;transform:scaleX(1.0112);">Write speed</span>
<svg style="left:0;top:0" width="661" height="524" viewBox="0 0 661 524" shape-rendering="crispEdges">
<defs><linearGradient id="pg283" x1="0" y1="0" x2="0" y2="1"><stop offset="0" stop-color="#4d5a7e"/><stop offset="1" stop-color="#7f8db0"/></linearGradient></defs>
<rect x="189" y="283" width="435" height="127" fill="url(#pg283)"/>
<rect x="198" y="283" width="1" height="126" fill="#424242"/>
<rect x="207" y="283" width="1" height="126" fill="#424242"/>
<rect x="215" y="283" width="1" height="126" fill="#424242"/>
<rect x="224" y="283" width="1" height="126" fill="#424242"/>
<rect x="241" y="283" width="1" height="126" fill="#424242"/>
<rect x="250" y="283" width="1" height="126" fill="#424242"/>
<rect x="258" y="283" width="1" height="126" fill="#424242"/>
<rect x="267" y="283" width="1" height="126" fill="#424242"/>
<rect x="284" y="283" width="1" height="126" fill="#424242"/>
<rect x="293" y="283" width="1" height="126" fill="#424242"/>
<rect x="302" y="283" width="1" height="126" fill="#424242"/>
<rect x="310" y="283" width="1" height="126" fill="#424242"/>
<rect x="328" y="283" width="1" height="126" fill="#424242"/>
<rect x="336" y="283" width="1" height="126" fill="#424242"/>
<rect x="345" y="283" width="1" height="126" fill="#424242"/>
<rect x="354" y="283" width="1" height="126" fill="#424242"/>
<rect x="371" y="283" width="1" height="126" fill="#424242"/>
<rect x="379" y="283" width="1" height="126" fill="#424242"/>
<rect x="388" y="283" width="1" height="126" fill="#424242"/>
<rect x="397" y="283" width="1" height="126" fill="#424242"/>
<rect x="414" y="283" width="1" height="126" fill="#424242"/>
<rect x="423" y="283" width="1" height="126" fill="#424242"/>
<rect x="431" y="283" width="1" height="126" fill="#424242"/>
<rect x="440" y="283" width="1" height="126" fill="#424242"/>
<rect x="457" y="283" width="1" height="126" fill="#424242"/>
<rect x="466" y="283" width="1" height="126" fill="#424242"/>
<rect x="475" y="283" width="1" height="126" fill="#424242"/>
<rect x="483" y="283" width="1" height="126" fill="#424242"/>
<rect x="501" y="283" width="1" height="126" fill="#424242"/>
<rect x="509" y="283" width="1" height="126" fill="#424242"/>
<rect x="518" y="283" width="1" height="126" fill="#424242"/>
<rect x="526" y="283" width="1" height="126" fill="#424242"/>
<rect x="544" y="283" width="1" height="126" fill="#424242"/>
<rect x="552" y="283" width="1" height="126" fill="#424242"/>
<rect x="561" y="283" width="1" height="126" fill="#424242"/>
<rect x="570" y="283" width="1" height="126" fill="#424242"/>
<rect x="587" y="283" width="1" height="126" fill="#424242"/>
<rect x="596" y="283" width="1" height="126" fill="#424242"/>
<rect x="604" y="283" width="1" height="126" fill="#424242"/>
<rect x="613" y="283" width="1" height="126" fill="#424242"/>
<rect x="189" y="315" width="434" height="1" fill="#262626"/>
<rect x="189" y="346" width="434" height="1" fill="#262626"/>
<rect x="189" y="378" width="434" height="1" fill="#262626"/>
<rect x="232" y="283" width="1" height="126" fill="#0c0c0c"/>
<rect x="276" y="283" width="1" height="126" fill="#0c0c0c"/>
<rect x="319" y="283" width="1" height="126" fill="#0c0c0c"/>
<rect x="362" y="283" width="1" height="126" fill="#0c0c0c"/>
<rect x="405" y="283" width="1" height="126" fill="#0c0c0c"/>
<rect x="449" y="283" width="1" height="126" fill="#0c0c0c"/>
<rect x="492" y="283" width="1" height="126" fill="#0c0c0c"/>
<rect x="535" y="283" width="1" height="126" fill="#0c0c0c"/>
<rect x="578" y="283" width="1" height="126" fill="#0c0c0c"/>
<rect x="191" y="397" width="1" height="12" fill="#6ccc00"/>
<rect x="192" y="378" width="1" height="31" fill="#6ccc00"/>
<rect x="193" y="397" width="3" height="12" fill="#20c400"/>
<rect x="196" y="397" width="1" height="12" fill="#6ccc00"/>
<rect x="197" y="397" width="8" height="12" fill="#20c400"/>
<rect x="205" y="391" width="4" height="18" fill="#20c400"/>
<rect x="209" y="397" width="3" height="12" fill="#20c400"/>
<rect x="212" y="378" width="1" height="31" fill="#6ccc00"/>
<rect x="213" y="397" width="7" height="12" fill="#20c400"/>
<rect x="220" y="391" width="2" height="18" fill="#20c400"/>
<rect x="222" y="397" width="2" height="12" fill="#20c400"/>
<rect x="224" y="397" width="1" height="12" fill="#6ccc00"/>
<rect x="225" y="397" width="1" height="12" fill="#20c400"/>
<rect x="226" y="372" width="1" height="37" fill="#6ccc00"/>
<rect x="227" y="397" width="1" height="12" fill="#20c400"/>
<rect x="228" y="397" width="1" height="12" fill="#6ccc00"/>
<rect x="229" y="397" width="1" height="12" fill="#20c400"/>
<rect x="230" y="397" width="1" height="12" fill="#6ccc00"/>
<rect x="231" y="397" width="1" height="12" fill="#20c400"/>
<rect x="232" y="391" width="3" height="18" fill="#20c400"/>
<rect x="235" y="391" width="1" height="18" fill="#6ccc00"/>
<rect x="236" y="397" width="4" height="12" fill="#20c400"/>
<rect x="240" y="391" width="1" height="18" fill="#20c400"/>
<rect x="241" y="397" width="1" height="12" fill="#20c400"/>
<rect x="242" y="391" width="3" height="18" fill="#20c400"/>
<rect x="245" y="397" width="2" height="12" fill="#20c400"/>
<rect x="247" y="391" width="3" height="18" fill="#20c400"/>
<rect x="250" y="397" width="4" height="12" fill="#20c400"/>
<rect x="254" y="391" width="1" height="18" fill="#6ccc00"/>
<rect x="255" y="391" width="1" height="18" fill="#20c400"/>
<rect x="256" y="378" width="1" height="31" fill="#6ccc00"/>
<rect x="257" y="397" width="6" height="12" fill="#20c400"/>
<rect x="263" y="391" width="4" height="18" fill="#20c400"/>
<rect x="267" y="397" width="2" height="12" fill="#20c400"/>
<rect x="269" y="397" width="1" height="12" fill="#6ccc00"/>
<rect x="270" y="397" width="1" height="12" fill="#20c400"/>
<rect x="271" y="391" width="4" height="18" fill="#20c400"/>
<rect x="275" y="384" width="2" height="25" fill="#30c600"/>
<rect x="277" y="391" width="1" height="18" fill="#6ccc00"/>
<rect x="278" y="391" width="4" height="18" fill="#20c400"/>
<rect x="282" y="384" width="1" height="25" fill="#6ccc00"/>
<rect x="283" y="391" width="2" height="18" fill="#20c400"/>
<rect x="285" y="384" width="1" height="25" fill="#30c600"/>
<rect x="286" y="372" width="1" height="37" fill="#6ccc00"/>
<rect x="287" y="384" width="2" height="25" fill="#30c600"/>
<rect x="289" y="391" width="3" height="18" fill="#20c400"/>
<rect x="292" y="384" width="2" height="25" fill="#30c600"/>
<rect x="294" y="391" width="10" height="18" fill="#20c400"/>
<rect x="304" y="391" width="1" height="18" fill="#6ccc00"/>
<rect x="305" y="391" width="5" height="18" fill="#20c400"/>
<rect x="310" y="391" width="1" height="18" fill="#6ccc00"/>
<rect x="311" y="391" width="2" height="18" fill="#20c400"/>
<rect x="313" y="384" width="2" height="25" fill="#30c600"/>
<rect x="315" y="391" width="4" height="18" fill="#20c400"/>
<rect x="319" y="384" width="1" height="25" fill="#30c600"/>
<rect x="320" y="391" width="6" height="18" fill="#20c400"/>
<rect x="326" y="384" width="3" height="25" fill="#30c600"/>
<rect x="329" y="391" width="2" height="18" fill="#20c400"/>
<rect x="331" y="391" width="1" height="18" fill="#6ccc00"/>
<rect x="332" y="391" width="3" height="18" fill="#20c400"/>
<rect x="335" y="384" width="3" height="25" fill="#30c600"/>
<rect x="338" y="372" width="1" height="37" fill="#6ccc00"/>
<rect x="339" y="384" width="1" height="25" fill="#30c600"/>
<rect x="340" y="378" width="1" height="31" fill="#6ccc00"/>
<rect x="341" y="384" width="1" height="25" fill="#6ccc00"/>
<rect x="342" y="378" width="1" height="31" fill="#6ccc00"/>
<rect x="343" y="378" width="1" height="31" fill="#30c600"/>
<rect x="344" y="384" width="1" height="25" fill="#30c600"/>
<rect x="345" y="384" width="1" height="25" fill="#6ccc00"/>
<rect x="346" y="384" width="1" height="25" fill="#30c600"/>
<rect x="347" y="384" width="1" height="25" fill="#6ccc00"/>
<rect x="348" y="372" width="1" height="37" fill="#6ccc00"/>
<rect x="349" y="384" width="1" height="25" fill="#6ccc00"/>
<rect x="350" y="384" width="3" height="25" fill="#30c600"/>
<rect x="353" y="378" width="2" height="31" fill="#6ccc00"/>
<rect x="355" y="378" width="1" height="31" fill="#30c600"/>
<rect x="356" y="384" width="1" height="25" fill="#6ccc00"/>
<rect x="357" y="384" width="1" height="25" fill="#30c600"/>
<rect x="358" y="378" width="4" height="31" fill="#30c600"/>
<rect x="362" y="372" width="1" height="37" fill="#6ccc00"/>
<rect x="363" y="384" width="1" height="25" fill="#30c600"/>
<rect x="364" y="378" width="2" height="31" fill="#30c600"/>
<rect x="366" y="384" width="2" height="25" fill="#6ccc00"/>
<rect x="368" y="384" width="2" height="25" fill="#30c600"/>
<rect x="370" y="378" width="1" height="31" fill="#6ccc00"/>
<rect x="371" y="378" width="1" height="31" fill="#30c600"/>
<rect x="372" y="359" width="1" height="50" fill="#8ccc00"/>
<rect x="373" y="384" width="1" height="25" fill="#6ccc00"/>
<rect x="374" y="366" width="1" height="43" fill="#6ccc00"/>
<rect x="375" y="378" width="1" height="31" fill="#30c600"/>
<rect x="376" y="378" width="2" height="31" fill="#6ccc00"/>
<rect x="378" y="384" width="1" height="25" fill="#6ccc00"/>
<rect x="379" y="378" width="2" height="31" fill="#30c600"/>
<rect x="381" y="378" width="1" height="31" fill="#6ccc00"/>
<rect x="382" y="378" width="1" height="31" fill="#30c600"/>
<rect x="383" y="384" width="1" height="25" fill="#6ccc00"/>
<rect x="384" y="366" width="1" height="43" fill="#6ccc00"/>
<rect x="385" y="384" width="1" height="25" fill="#30c600"/>
<rect x="386" y="378" width="3" height="31" fill="#30c600"/>
<rect x="389" y="378" width="1" height="31" fill="#6ccc00"/>
<rect x="390" y="372" width="1" height="37" fill="#6ccc00"/>
<rect x="391" y="384" width="1" height="25" fill="#30c600"/>
<rect x="392" y="384" width="1" height="25" fill="#6ccc00"/>
<rect x="393" y="378" width="4" height="31" fill="#30c600"/>
<rect x="397" y="384" width="3" height="25" fill="#30c600"/>
<rect x="400" y="378" width="1" height="31" fill="#30c600"/>
<rect x="401" y="384" width="1" height="25" fill="#30c600"/>
<rect x="402" y="359" width="1" height="50" fill="#8ccc00"/>
<rect x="403" y="378" width="1" height="31" fill="#30c600"/>
<rect x="404" y="359" width="1" height="50" fill="#8ccc00"/>
<rect x="405" y="384" width="3" height="25" fill="#30c600"/>
<rect x="408" y="378" width="1" height="31" fill="#6ccc00"/>
<rect x="409" y="378" width="1" height="31" fill="#30c600"/>
<rect x="410" y="366" width="1" height="43" fill="#6ccc00"/>
<rect x="411" y="384" width="2" height="25" fill="#30c600"/>
<rect x="413" y="378" width="1" height="31" fill="#30c600"/>
<rect x="414" y="384" width="4" height="25" fill="#30c600"/>
<rect x="418" y="384" width="1" height="25" fill="#6ccc00"/>
<rect x="419" y="384" width="1" height="25" fill="#30c600"/>
<rect x="420" y="372" width="1" height="37" fill="#6ccc00"/>
<rect x="421" y="372" width="1" height="37" fill="#40c800"/>
<rect x="422" y="378" width="2" height="31" fill="#30c600"/>
<rect x="424" y="378" width="2" height="31" fill="#6ccc00"/>
<rect x="426" y="372" width="4" height="37" fill="#40c800"/>
<rect x="430" y="378" width="2" height="31" fill="#30c600"/>
<rect x="432" y="378" width="2" height="31" fill="#6ccc00"/>
<rect x="434" y="372" width="1" height="37" fill="#6ccc00"/>
<rect x="435" y="378" width="4" height="31" fill="#30c600"/>
<rect x="439" y="372" width="1" height="37" fill="#40c800"/>
<rect x="440" y="378" width="1" height="31" fill="#30c600"/>
<rect x="441" y="378" width="1" height="31" fill="#6ccc00"/>
<rect x="442" y="372" width="1" height="37" fill="#40c800"/>
<rect x="443" y="378" width="1" height="31" fill="#30c600"/>
<rect x="444" y="366" width="1" height="43" fill="#6ccc00"/>
<rect x="445" y="378" width="1" height="31" fill="#6ccc00"/>
<rect x="446" y="378" width="2" height="31" fill="#30c600"/>
<rect x="448" y="378" width="1" height="31" fill="#6ccc00"/>
<rect x="449" y="378" width="1" height="31" fill="#30c600"/>
<rect x="450" y="378" width="2" height="31" fill="#6ccc00"/>
<rect x="452" y="378" width="3" height="31" fill="#30c600"/>
<rect x="455" y="372" width="1" height="37" fill="#6ccc00"/>
<rect x="456" y="359" width="1" height="50" fill="#8ccc00"/>
<rect x="457" y="378" width="1" height="31" fill="#6ccc00"/>
<rect x="458" y="372" width="2" height="37" fill="#6ccc00"/>
<rect x="460" y="378" width="4" height="31" fill="#30c600"/>
<rect x="464" y="378" width="1" height="31" fill="#6ccc00"/>
<rect x="465" y="378" width="2" height="31" fill="#30c600"/>
<rect x="467" y="378" width="1" height="31" fill="#6ccc00"/>
<rect x="468" y="378" width="2" height="31" fill="#30c600"/>
<rect x="470" y="366" width="1" height="43" fill="#6ccc00"/>
<rect x="471" y="378" width="1" height="31" fill="#30c600"/>
<rect x="472" y="378" width="1" height="31" fill="#6ccc00"/>
<rect x="473" y="378" width="1" height="31" fill="#30c600"/>
<rect x="474" y="372" width="1" height="37" fill="#6ccc00"/>
<rect x="475" y="372" width="1" height="37" fill="#40c800"/>
<rect x="476" y="378" width="1" height="31" fill="#30c600"/>
<rect x="477" y="378" width="1" height="31" fill="#6ccc00"/>
<rect x="478" y="378" width="1" height="31" fill="#30c600"/>
<rect x="479" y="372" width="1" height="37" fill="#40c800"/>
<rect x="480" y="359" width="1" height="50" fill="#8ccc00"/>
<rect x="481" y="372" width="1" height="37" fill="#40c800"/>
<rect x="482" y="359" width="1" height="50" fill="#8ccc00"/>
<rect x="483" y="366" width="2" height="43" fill="#6ccc00"/>
<rect x="485" y="372" width="1" height="37" fill="#6ccc00"/>
<rect x="486" y="372" width="3" height="37" fill="#40c800"/>
<rect x="489" y="366" width="2" height="43" fill="#6ccc00"/>
<rect x="491" y="341" width="1" height="68" fill="#8ccc00"/>
<rect x="492" y="366" width="1" height="43" fill="#40c800"/>
<rect x="493" y="366" width="1" height="43" fill="#6ccc00"/>
<rect x="494" y="372" width="1" height="37" fill="#40c800"/>
<rect x="495" y="372" width="2" height="37" fill="#6ccc00"/>
<rect x="497" y="372" width="1" height="37" fill="#40c800"/>
<rect x="498" y="359" width="1" height="50" fill="#8ccc00"/>
<rect x="499" y="372" width="1" height="37" fill="#6ccc00"/>
<rect x="500" y="366" width="1" height="43" fill="#6ccc00"/>
<rect x="501" y="372" width="1" height="37" fill="#6ccc00"/>
<rect x="502" y="366" width="2" height="43" fill="#6ccc00"/>
<rect x="504" y="366" width="1" height="43" fill="#40c800"/>
<rect x="505" y="366" width="1" height="43" fill="#6ccc00"/>
<rect x="506" y="372" width="1" height="37" fill="#6ccc00"/>
<rect x="507" y="372" width="3" height="37" fill="#40c800"/>
<rect x="510" y="347" width="1" height="62" fill="#8ccc00"/>
<rect x="511" y="372" width="1" height="37" fill="#40c800"/>
<rect x="512" y="359" width="1" height="50" fill="#8ccc00"/>
<rect x="513" y="372" width="2" height="37" fill="#40c800"/>
<rect x="515" y="372" width="1" height="37" fill="#6ccc00"/>
<rect x="516" y="372" width="3" height="37" fill="#40c800"/>
<rect x="519" y="366" width="1" height="43" fill="#6ccc00"/>
<rect x="520" y="353" width="1" height="56" fill="#8ccc00"/>
<rect x="521" y="366" width="1" height="43" fill="#6ccc00"/>
<rect x="522" y="353" width="1" height="56" fill="#8ccc00"/>
<rect x="523" y="366" width="1" height="43" fill="#40c800"/>
<rect x="524" y="372" width="1" height="37" fill="#40c800"/>
<rect x="525" y="372" width="1" height="37" fill="#6ccc00"/>
<rect x="526" y="366" width="1" height="43" fill="#40c800"/>
<rect x="527" y="372" width="2" height="37" fill="#40c800"/>
<rect x="529" y="372" width="3" height="37" fill="#6ccc00"/>
<rect x="532" y="366" width="3" height="43" fill="#40c800"/>
<rect x="535" y="366" width="1" height="43" fill="#6ccc00"/>
<rect x="536" y="353" width="1" height="56" fill="#8ccc00"/>
<rect x="537" y="366" width="1" height="43" fill="#40c800"/>
<rect x="538" y="359" width="1" height="50" fill="#40c800"/>
<rect x="539" y="366" width="1" height="43" fill="#40c800"/>
<rect x="540" y="359" width="1" height="50" fill="#8ccc00"/>
<rect x="541" y="378" width="1" height="31" fill="#30c600"/>
<rect x="542" y="372" width="1" height="37" fill="#40c800"/>
<rect x="543" y="372" width="1" height="37" fill="#6ccc00"/>
<rect x="544" y="353" width="1" height="56" fill="#8ccc00"/>
<rect x="545" y="372" width="1" height="37" fill="#6ccc00"/>
<rect x="546" y="372" width="1" height="37" fill="#40c800"/>
<rect x="547" y="378" width="2" height="31" fill="#30c600"/>
<rect x="549" y="372" width="1" height="37" fill="#40c800"/>
<rect x="550" y="378" width="1" height="31" fill="#6ccc00"/>
<rect x="551" y="372" width="1" height="37" fill="#40c800"/>
<rect x="552" y="359" width="1" height="50" fill="#8ccc00"/>
<rect x="553" y="372" width="1" height="37" fill="#6ccc00"/>
<rect x="554" y="372" width="1" height="37" fill="#40c800"/>
<rect x="555" y="378" width="1" height="31" fill="#30c600"/>
<rect x="556" y="372" width="1" height="37" fill="#40c800"/>
<rect x="557" y="359" width="1" height="50" fill="#40c800"/>
<rect x="558" y="372" width="2" height="37" fill="#40c800"/>
<rect x="560" y="372" width="1" height="37" fill="#6ccc00"/>
<rect x="561" y="372" width="2" height="37" fill="#40c800"/>
<rect x="563" y="378" width="1" height="31" fill="#30c600"/>
<rect x="564" y="378" width="1" height="31" fill="#6ccc00"/>
<rect x="565" y="378" width="1" height="31" fill="#30c600"/>
<rect x="566" y="359" width="1" height="50" fill="#8ccc00"/>
<rect x="567" y="378" width="1" height="31" fill="#6ccc00"/>
<rect x="568" y="378" width="1" height="31" fill="#30c600"/>
<rect x="569" y="378" width="1" height="31" fill="#6ccc00"/>
<rect x="570" y="341" width="1" height="68" fill="#8ccc00"/>
<rect x="571" y="372" width="1" height="37" fill="#40c800"/>
<rect x="572" y="347" width="1" height="62" fill="#8ccc00"/>
<rect x="573" y="378" width="1" height="31" fill="#6ccc00"/>
<rect x="574" y="378" width="1" height="31" fill="#30c600"/>
<rect x="575" y="372" width="1" height="37" fill="#6ccc00"/>
<rect x="576" y="353" width="1" height="56" fill="#8ccc00"/>
<rect x="577" y="372" width="1" height="37" fill="#40c800"/>
<rect x="578" y="366" width="1" height="43" fill="#6ccc00"/>
<rect x="579" y="372" width="1" height="37" fill="#40c800"/>
<rect x="580" y="366" width="1" height="43" fill="#40c800"/>
<rect x="581" y="366" width="1" height="43" fill="#6ccc00"/>
<rect x="582" y="378" width="1" height="31" fill="#30c600"/>
<rect x="583" y="372" width="1" height="37" fill="#40c800"/>
<rect x="584" y="341" width="1" height="68" fill="#8ccc00"/>
<rect x="585" y="378" width="1" height="31" fill="#30c600"/>
<rect x="586" y="359" width="1" height="50" fill="#8ccc00"/>
<rect x="587" y="378" width="1" height="31" fill="#6ccc00"/>
<rect x="588" y="366" width="1" height="43" fill="#40c800"/>
<rect x="589" y="378" width="1" height="31" fill="#6ccc00"/>
<rect x="590" y="359" width="1" height="50" fill="#8ccc00"/>
<rect x="591" y="372" width="1" height="37" fill="#40c800"/>
<rect x="592" y="366" width="1" height="43" fill="#6ccc00"/>
<rect x="593" y="366" width="1" height="43" fill="#a2acd2"/>
<rect x="592" y="285" width="1" height="81" fill="#3ecbfb"/>
<path d="M191.5 354.1 L192.5 354.5 L193.5 353.5 L194.5 353.4 L195.5 354.1 L196.5 353.3 L197.5 353.2 L198.5 354.0 L199.5 353.7 L200.5 353.9 L201.5 353.7 L202.5 353.3 L203.5 353.2 L204.5 353.2 L205.5 353.4 L206.5 352.9 L207.5 352.3 L208.5 352.9 L209.5 352.5 L210.5 352.9 L211.5 352.2 L212.5 352.3 L213.5 351.8 L214.5 352.8 L215.5 352.0 L216.5 352.2 L217.5 352.2 L218.5 352.1 L219.5 351.3 L220.5 352.0 L221.5 351.5 L222.5 352.2 L223.5 350.9 L224.5 351.0 L225.5 351.1 L226.5 351.2 L227.5 351.3 L228.5 351.1 L229.5 350.8 L230.5 350.9 L231.5 350.3 L232.5 350.9 L233.5 350.2 L234.5 350.8 L235.5 350.9 L236.5 350.8 L237.5 350.6 L238.5 349.6 L239.5 349.7 L240.5 349.7 L241.5 350.2 L242.5 350.2 L243.5 349.9 L244.5 349.4 L245.5 350.0 L246.5 349.4 L247.5 349.6 L248.5 349.0 L249.5 349.0 L250.5 349.6 L251.5 349.3 L252.5 348.6 L253.5 348.4 L254.5 348.8 L255.5 348.3 L256.5 349.0 L257.5 348.6 L258.5 348.3 L259.5 348.9 L260.5 348.2 L261.5 347.7 L262.5 348.5 L263.5 348.6 L264.5 347.7 L265.5 347.6 L266.5 348.1 L267.5 347.9 L268.5 347.8 L269.5 348.0 L270.5 347.1 L271.5 347.7 L272.5 346.9 L273.5 346.9 L274.5 347.5 L275.5 346.7 L276.5 347.3 L277.5 346.6 L278.5 347.2 L279.5 346.5 L280.5 346.6 L281.5 346.4 L282.5 346.1 L283.5 346.0 L284.5 346.8 L285.5 346.6 L286.5 345.5 L287.5 346.1 L288.5 345.5 L289.5 345.8 L290.5 345.4 L291.5 346.2 L292.5 345.6 L293.5 345.2 L294.5 345.6 L295.5 345.1 L296.5 344.9 L297.5 344.8 L298.5 345.5 L299.5 344.5 L300.5 344.9 L301.5 345.3 L302.5 344.4 L303.5 345.0 L304.5 344.9 L305.5 344.7 L306.5 344.5 L307.5 344.8 L308.5 343.9 L309.5 343.9 L310.5 344.4 L311.5 343.5 L312.5 344.6 L313.5 344.4 L314.5 343.5 L315.5 344.1 L316.5 344.1 L317.5 344.2 L318.5 343.8 L319.5 344.0 L320.5 343.2 L321.5 343.9 L322.5 343.3 L323.5 342.7 L324.5 343.0 L325.5 343.2 L326.5 343.4 L327.5 342.3 L328.5 343.3 L329.5 342.7 L330.5 342.7 L331.5 342.2 L332.5 342.3 L333.5 341.8 L334.5 341.7 L335.5 341.9 L336.5 342.1 L337.5 342.0 L338.5 341.4 L339.5 341.6 L340.5 341.5 L341.5 341.2 L342.5 341.8 L343.5 341.1 L344.5 341.2 L345.5 341.5 L346.5 341.0 L347.5 341.7 L348.5 341.8 L349.5 340.6 L350.5 340.4 L351.5 341.0 L352.5 341.0 L353.5 341.1 L354.5 340.1 L355.5 340.9 L356.5 340.3 L357.5 340.0 L358.5 340.4 L359.5 339.7 L360.5 340.4 L361.5 339.8 L362.5 340.4 L363.5 340.0 L364.5 339.6 L365.5 340.1 L366.5 339.3 L367.5 339.1 L368.5 339.9 L369.5 339.6 L370.5 340.1 L371.5 339.5 L372.5 339.2 L373.5 339.7 L374.5 338.6 L375.5 339.5 L376.5 339.0 L377.5 339.6 L378.5 339.2 L379.5 338.5 L380.5 338.9 L381.5 338.3 L382.5 338.2 L383.5 338.6 L384.5 338.9 L385.5 338.0 L386.5 337.8 L387.5 338.6 L388.5 338.7 L389.5 337.7 L390.5 337.9 L391.5 338.3 L392.5 338.3 L393.5 337.9 L394.5 337.3 L395.5 338.1 L396.5 337.4 L397.5 337.9 L398.5 337.4 L399.5 337.5 L400.5 337.3 L401.5 337.8 L402.5 336.8 L403.5 336.5 L404.5 337.1 L405.5 337.1 L406.5 336.6 L407.5 337.3 L408.5 337.3 L409.5 336.5 L410.5 336.6 L411.5 336.4 L412.5 337.1 L413.5 336.0 L414.5 336.2 L415.5 336.8 L416.5 336.0 L417.5 335.6 L418.5 336.4 L419.5 335.5 L420.5 335.4 L421.5 335.5 L422.5 335.8 L423.5 335.8 L424.5 335.9 L425.5 334.9 L426.5 335.1 L427.5 334.1 L428.5 333.4 L429.5 332.4 L430.5 332.0 L431.5 332.5 L432.5 332.3 L433.5 332.2 L434.5 332.3 L435.5 332.6 L436.5 332.8 L437.5 332.2 L438.5 332.4 L439.5 332.5 L440.5 332.4 L441.5 332.8 L442.5 332.1 L443.5 332.7 L444.5 332.6 L445.5 331.7 L446.5 332.5 L447.5 331.8 L448.5 332.0 L449.5 332.3 L450.5 331.8 L451.5 331.9 L452.5 331.3 L453.5 331.2 L454.5 331.8 L455.5 331.9 L456.5 331.6 L457.5 332.2 L458.5 331.6 L459.5 332.1 L460.5 331.9 L461.5 331.3 L462.5 331.2 L463.5 331.5 L464.5 330.9 L465.5 331.9 L466.5 331.7 L467.5 331.3 L468.5 331.4 L469.5 331.2 L470.5 331.8 L471.5 331.0 L472.5 331.7 L473.5 331.5 L474.5 331.6 L475.5 330.9 L476.5 331.7 L477.5 330.5 L478.5 331.2 L479.5 331.4 L480.5 331.2 L481.5 331.0 L482.5 331.3 L483.5 330.6 L484.5 330.6 L485.5 330.7 L486.5 330.3 L487.5 330.5 L488.5 331.2 L489.5 331.0 L490.5 330.7 L491.5 330.9 L492.5 330.8 L493.5 330.7 L494.5 330.3 L495.5 330.6 L496.5 330.3 L497.5 330.6 L498.5 331.3 L499.5 330.1 L500.5 331.2 L501.5 330.8 L502.5 331.3 L503.5 330.7 L504.5 330.5 L505.5 331.0 L506.5 330.2 L507.5 331.2 L508.5 330.2 L509.5 330.4 L510.5 331.2 L511.5 331.3 L512.5 331.3 L513.5 330.7 L514.5 331.1 L515.5 330.2 L516.5 331.3 L517.5 330.4 L518.5 331.0 L519.5 331.5 L520.5 330.6 L521.5 330.8 L522.5 331.2 L523.5 331.1 L524.5 331.3 L525.5 331.3 L526.5 330.8 L527.5 330.9 L528.5 331.3 L529.5 331.2 L530.5 330.3 L531.5 331.1 L532.5 331.0 L533.5 331.4 L534.5 331.5 L535.5 330.8 L536.5 331.3 L537.5 330.7 L538.5 331.3 L539.5 331.2 L540.5 330.8 L541.5 330.8 L542.5 331.2 L543.5 330.7 L544.5 330.9 L545.5 330.6 L546.5 330.7 L547.5 330.6 L548.5 331.4 L549.5 331.6 L550.5 331.7 L551.5 331.3 L552.5 331.2 L553.5 331.4 L554.5 331.5 L555.5 331.2 L556.5 331.4 L557.5 331.7 L558.5 330.7 L559.5 331.1 L560.5 331.5 L561.5 331.4 L562.5 331.1 L563.5 331.7 L564.5 331.1 L565.5 330.9 L566.5 331.6 L567.5 331.2 L568.5 330.7 L569.5 331.0 L570.5 331.3 L571.5 331.8 L572.5 330.7 L573.5 330.6 L574.5 330.9 L575.5 331.6 L576.5 331.2 L577.5 330.9 L578.5 331.2 L579.5 330.7 L580.5 331.2 L581.5 331.9 L582.5 331.6 L583.5 330.7 L584.5 330.7 L585.5 330.8 L586.5 331.7 L587.5 331.6 L588.5 331.2 L589.5 331.9 L590.5 330.9" fill="none" stroke="#dcaadc" stroke-width="1.1" shape-rendering="auto"/>
<rect x="189" y="283" width="2" height="127" fill="#000"/>
<rect x="189" y="283" width="435" height="2" fill="#000"/>
<rect x="189" y="408.5" width="435" height="1.5" fill="#000" shape-rendering="auto"/>
<rect x="622" y="283" width="2" height="127" fill="#000"/>
</svg>
<div style="left:186px;top:284px;width:3px;height:1px;background:#000"></div>
<span class="t" style="top:278px;font-size:10.5px;line-height:12px;color:#000;left:174.65px;">20</span>
<div style="left:186px;top:315px;width:3px;height:1px;background:#000"></div>
<span class="t" style="top:309px;font-size:10.5px;line-height:12px;color:#000;left:174.65px;">15</span>
<div style="left:186px;top:346px;width:3px;height:1px;background:#000"></div>
<span class="t" style="top:340px;font-size:10.5px;line-height:12px;color:#000;left:174.65px;">10</span>
<div style="left:186px;top:378px;width:3px;height:1px;background:#000"></div>
<span class="t" style="top:372px;font-size:10.5px;line-height:12px;color:#000;left:180.47px;">5</span>
<span class="t" style="top:278px;font-size:10.5px;line-height:12px;color:#000;left:626.70px;">20%</span>
<span class="t" style="top:303px;font-size:10.5px;line-height:12px;color:#000;left:626.70px;">16%</span>
<span class="t" style="top:328px;font-size:10.5px;line-height:12px;color:#000;left:626.70px;">12%</span>
<span class="t" style="top:353px;font-size:10.5px;line-height:12px;color:#000;left:626.70px;">8%</span>
<span class="t" style="top:378px;font-size:10.5px;line-height:12px;color:#000;left:626.70px;">4%</span>
<span class="t" style="top:410px;font-size:10.5px;line-height:12px;color:#000;left:183.15px;">0.0</span>
<span class="t" style="top:410px;font-size:10.5px;line-height:12px;color:#000;left:225.18px;">2.5</span>
<span class="t" style="top:410px;font-size:10.5px;line-height:12px;color:#000;left:268.41px;">5.0</span>
<span class="t" style="top:410px;font-size:10.5px;line-height:12px;color:#000;left:311.64px;">7.5</span>
<span class="t" style="top:410px;font-size:10.5px;line-height:12px;color:#000;left:351.95px;">10.0</span>
<span class="t" style="top:410px;font-size:10.5px;line-height:12px;color:#000;left:395.18px;">12.5</span>
<span class="t" style="top:410px;font-size:10.5px;line-height:12px;color:#000;left:438.41px;">15.0</span>
<span class="t" style="top:410px;font-size:10.5px;line-height:12px;color:#000;left:481.64px;">17.5</span>
<span class="t" style="top:410px;font-size:10.5px;line-height:12px;color:#000;left:524.87px;">20.0</span>
<span class="t" style="top:410px;font-size:10.5px;line-height:12px;color:#000;left:568.10px;">22.5</span>
<span class="t" style="top:410px;font-size:10.5px;line-height:12px;color:#000;left:602.80px;">25.0 GB</span>
<div style="left:191px;top:273px;width:6px;height:8px;background:#007800"></div>
<span class="t" style="top:271px;font-size:10.67px;line-height:12px;color:#000;left:200.30px;transform:scaleX(0.8848);">BIS</span>
<div style="left:219px;top:273px;width:6px;height:8px;background:#d6a6d6"></div>
<span class="t" style="top:271px;font-size:10.67px;line-height:12px;color:#000;left:228.50px;transform:scaleX(0.9437);">Jitter</span>
<div style="left:254px;top:270px;width:6px;height:3px;background:#000"></div>
<span class="t" style="top:430px;font-size:11.2px;line-height:12px;color:#000;left:252.80px;transform:scaleX(0.8705);">LDC</span>
<span class="t" style="top:430px;font-size:11.2px;line-height:12px;color:#000;left:310.20px;transform:scaleX(0.8873);">BIS</span>
<span class="t" style="top:447px;font-size:11.2px;line-height:12px;color:#000;left:163.20px;transform:scaleX(0.9688);">Avg</span>
<span class="t" style="top:447px;font-size:11.2px;line-height:12px;color:#0404f4;left:246.30px;transform:scaleX(0.9445);">44.06</span>
<span class="t" style="top:447px;font-size:11.2px;line-height:12px;color:#0404f4;left:305.60px;transform:scaleX(0.9640);">0.73</span>
<span class="t" style="top:463px;font-size:11.2px;line-height:12px;color:#000;left:163.20px;transform:scaleX(0.9921);">Max</span>
<span class="t" style="top:463px;font-size:11.2px;line-height:12px;color:#0404f4;left:256.30px;transform:scaleX(0.8822);">483</span>
<span class="t" style="top:463px;font-size:11.2px;line-height:12px;color:#0404f4;left:316.80px;transform:scaleX(0.8413);">11</span>
<span class="t" style="top:479px;font-size:11.2px;line-height:12px;color:#000;left:161.00px;transform:scaleX(0.9733);">Total</span>
<span class="t" style="top:479px;font-size:11.2px;line-height:12px;color:#0404f4;left:225.80px;transform:scaleX(0.9430);">16822648</span>
<span class="t" style="top:479px;font-size:11.2px;line-height:12px;color:#0404f4;left:291.10px;transform:scaleX(0.9504);">280072</span>
<div style="left:395px;top:430px;width:13px;height:13px;background:#fff;border:1px solid #333;box-sizing:border-box"></div>
<svg style="left:396px;top:431px" width="11" height="11" viewBox="0 0 11 11"><path d="M1.5 5.5 L4.2 8.3 L9.6 2.2" stroke="#222" stroke-width="1.2" fill="none"/></svg>
<span class="t" style="top:431px;font-size:11.2px;line-height:12px;color:#000;left:417.20px;transform:scaleX(1.0310);">Jitter</span>
<span class="t" style="top:447px;font-size:11.2px;line-height:12px;color:#0404f4;left:412.80px;transform:scaleX(0.9511);">11.2%</span>
<span class="t" style="top:463px;font-size:11.2px;line-height:12px;color:#0404f4;left:412.80px;transform:scaleX(0.9259);">12.8%</span>
<span class="t" style="top:435px;font-size:11.2px;line-height:12px;color:#000;left:461.70px;transform:scaleX(0.9577);">Speed</span>
<span class="t" style="top:463px;font-size:11.2px;line-height:12px;color:#000;left:461.70px;transform:scaleX(1.0158);">Position</span>
<span class="t" style="top:479px;font-size:11.2px;line-height:12px;color:#000;left:461.70px;transform:scaleX(0.9296);">Samples</span>
<span class="t" style="top:435px;font-size:11.2px;line-height:12px;color:#0404f4;left:520.00px;transform:scaleX(0.9268);">4.19 X</span>
<span class="t" style="top:463px;font-size:11.2px;line-height:12px;color:#0404f4;left:520.00px;transform:scaleX(0.9751);">23862 MB</span>
<span class="t" style="top:479px;font-size:11.2px;line-height:12px;color:#0404f4;left:520.00px;transform:scaleX(0.9638);">379486</span>
<div style="left:575px;top:428px;width:75px;height:21px;background:#e1e1e1;border:1px solid #adadad;box-sizing:border-box"></div>
<span class="t" style="top:434px;font-size:11.2px;line-height:12px;color:#000;left:579.30px;transform:scaleX(0.9101);">4.0 X</span>
<svg style="left:636.6px;top:436.3px" width="10" height="6" viewBox="0 0 10 6"><path d="M0.6 0.8 L4.6 4.8 L8.6 0.8" stroke="#4a4a4a" stroke-width="1.15" fill="none"/></svg>
<div style="left:576px;top:452px;width:73px;height:21px;background:#e1e1e1;border:1px solid #adadad;box-sizing:border-box"></div>
<span class="t" style="top:458px;font-size:11.2px;line-height:12px;color:#000;left:590.60px;transform:scaleX(1.0413);">Start full</span>
<div style="left:575px;top:479px;width:73px;height:21px;background:#e1e1e1;border:1px solid #adadad;box-sizing:border-box"></div>
<span class="t" style="top:485px;font-size:11.2px;line-height:12px;color:#000;left:587.60px;transform:scaleX(1.0263);">Start part</span>
<div style="left:1px;top:505px;width:659px;height:18px;background:#f0f0f0"></div>
<span class="t" style="top:509px;font-size:11.2px;line-height:12px;color:#000;left:3.60px;transform:scaleX(0.9493);">Test completed</span>
<div style="left:141px;top:506px;width:1px;height:16px;background:#d0d0d0"></div>
<div style="left:146px;top:508px;width:302px;height:13px;background:#e6e6e6;border:1px solid #bcbcbc;box-sizing:border-box"></div>
<div style="left:147px;top:509px;width:300px;height:11px;background:#06b025"></div>
<span class="t" style="top:509px;font-size:11.2px;line-height:12px;color:#000;left:454.50px;transform:scaleX(0.9087);">100.0%</span>
<div style="left:507px;top:506px;width:1px;height:16px;background:#d0d0d0"></div>
<span class="t" style="top:509px;font-size:11.2px;line-height:12px;color:#000;left:602.00px;transform:scaleX(0.9624);">33:13</span>
<div style="left:630px;top:506px;width:1px;height:16px;background:#d0d0d0"></div>
<div style="left:656px;top:513px;width:2px;height:2px;background:#b4b4b4"></div>
<div style="left:653px;top:516px;width:2px;height:2px;background:#b4b4b4"></div>
<div style="left:656px;top:516px;width:2px;height:2px;background:#b4b4b4"></div>
<div style="left:650px;top:519px;width:2px;height:2px;background:#b4b4b4"></div>
<div style="left:653px;top:519px;width:2px;height:2px;background:#b4b4b4"></div>
<div style="left:656px;top:519px;width:2px;height:2px;background:#b4b4b4"></div>
</div></body></html>
